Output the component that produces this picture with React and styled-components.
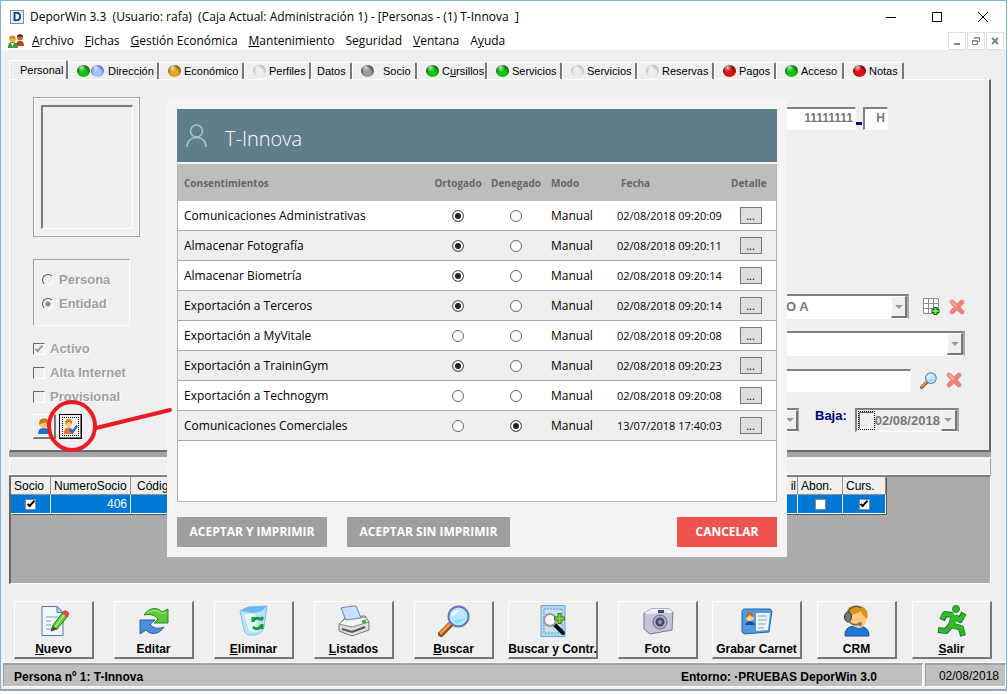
import React from "react";
import styled, { createGlobalStyle, css } from "styled-components";

const ui = '"Open Sans", "Noto Sans", sans-serif';
const classic = '"Liberation Sans", Arial, sans-serif';

const GlobalStyle = createGlobalStyle`
  *, *::before, *::after { box-sizing: border-box; }
  body { margin: 0; background: #fff; font-family: ${classic}; font-size: 12px; color: #000; }
  button, input, select { font: inherit; color: inherit; margin: 0; padding: 0; }
`;

/* ---------- window frame ---------- */

const Window = styled.div`
  position: relative;
  margin-right: 1px;
  border: 1px solid #86aedb;
  background: #efefef;
`;

const TitleBar = styled.header`
  display: flex;
  align-items: center;
  height: 31px;
  padding: 0 17px 0 9px;
  background: #fff;
  font: 12px/16px ${ui};
`;

const AppBadge = styled.span`
  width: 14px;
  height: 14px;
  margin-right: 6px;
  border: 1px solid #6d8ec4;
  background: #e8f0fb;
  color: #12306e;
  font: bold 12px/12px ${classic};
  text-align: center;
`;

const Title = styled.h1`
  flex: 1;
  margin: 0;
  font: inherit;
  white-space: pre;
`;

const WindowButtons = styled.div`
  display: flex;
  gap: 34px;
`;

const FrameButton = styled.button`
  display: flex;
  width: 12px;
  height: 12px;
  border: 0;
  background: none;
`;

const MenuBar = styled.nav`
  display: flex;
  align-items: center;
  height: 18px;
  padding: 0 2px 0 7px;
  background: #fff;
  font: 12px/16px ${ui};
`;

const MenuItems = styled.div`
  display: flex;
  flex: 1;
  gap: 11px;
  margin-left: 8px;
`;

const MenuItem = styled.button`
  border: 0;
  background: none;
  white-space: nowrap;
`;

const MdiButtons = styled.div`
  display: flex;
  gap: 1px;
`;

const MdiButton = styled.button`
  display: flex;
  align-items: center;
  justify-content: center;
  width: 18px;
  height: 18px;
  border: 1px solid #e0e0e0;
  background: #fff;
`;

/* ---------- tabs and record panel ---------- */

const Workspace = styled.main`
  padding: 10px 15px 17px 8px;
`;

const Tabs = styled.div`
  display: flex;
  align-items: flex-end;
  height: 19px;
  font-size: 11px;
`;

const Tab = styled.button`
  display: flex;
  align-items: center;
  gap: ${(p) => p.$gap || 3}px;
  width: ${(p) => p.$w}px;
  height: ${(p) => (p.$active ? 19 : 17)}px;
  padding-left: ${(p) => (p.$active ? 10 : p.$plain ? 5 : 8)}px;
  border: 0;
  border-top: 1px solid #fff;
  border-left: 1px solid #fff;
  border-right: 2px solid #777;
  border-radius: 2px 2px 0 0;
  background: #efefef;
  white-space: nowrap;
`;

const tones = {
  green: ["#10c410", "#0a4a0a"],
  blue: ["#a9c0ff", "#4a5da8"],
  amber: ["#e8a818", "#5c4208"],
  white: ["#ececec", "#aaaaaa"],
  gray: ["#9a9a9a", "#333333"],
  red: ["#e01010", "#4c0808"],
};

const Dot = styled.span`
  width: 13px;
  height: 12px;
  border-radius: 50%;
  background:
    radial-gradient(circle at 35% 20%, #ffffffbb 0, #ffffff00 35%),
    radial-gradient(circle at 50% 65%, ${(p) => tones[p.$tone][0]} 35%, ${(p) => tones[p.$tone][1]} 80%);
`;

const Dots = styled.span`
  display: flex;
  gap: 1px;
`;

const Panel = styled.section`
  display: flex;
  justify-content: space-between;
  padding: 17px 0 11px 23px;
  border: solid;
  border-width: 1px 2px 2px 1px;
  border-color: #fff #696969 #696969 #fff;
`;

const LeftColumn = styled.div`
  display: flex;
  flex-direction: column;
  width: 107px;
`;

const PhotoFrame = styled.div`
  display: flex;
  height: 140px;
  padding: 7px 6px 7px 7px;
  border: 1px solid #a0a0a0;
  box-shadow: inset 0 0 0 1px #fff;
`;

const Photo = styled.div`
  flex: 1;
  border: solid;
  border-width: 2px 1px 1px 2px;
  border-color: #7a7a7a #fff #fff #7a7a7a;
`;

const KindGroup = styled.fieldset`
  width: 97px;
  height: 67px;
  margin: 22px 0 11px;
  padding: 8px 0 0 8px;
  border: 1px solid;
  border-color: #a0a0a0 #fff #fff #a0a0a0;
`;

const DisabledLabel = styled.label`
  display: flex;
  align-items: center;
  gap: 5px;
  height: 24px;
  color: #a0a0a0;
  font: bold 13px/16px ${classic};
  text-shadow: 1px 1px 0 #fff;
  white-space: nowrap;
`;

const SunkenRadio = styled.input.attrs({ type: "radio" })`
  appearance: none;
  width: 12px;
  height: 12px;
  border: 1px solid;
  border-color: #555 #fff #fff #555;
  border-radius: 50%;
  background: radial-gradient(circle, ${(p) => (p.checked ? "#888" : "#efefef")} 2px, #efefef 3px);
`;

const tick = css`
  &:checked::after {
    content: "";
    width: 4px;
    height: 8px;
    margin-bottom: 2px;
    border: solid ${(p) => p.$ink || "#000"};
    border-width: 0 2px 2px 0;
    transform: rotate(42deg);
  }
`;

const SunkenCheck = styled.input.attrs({ type: "checkbox" })`
  appearance: none;
  display: flex;
  align-items: center;
  justify-content: center;
  width: 12px;
  height: 12px;
  border: 1px solid;
  border-color: #666 #fff #fff #666;
  ${tick}
`;

const SmallButtons = styled.div`
  display: flex;
  gap: 3px;
  margin-top: 5px;
`;

const raised = css`
  border: solid;
  border-width: 1px 2px 2px 1px;
  border-color: #fff #777 #777 #fff;
  background: #efefef;
`;

const SmallButton = styled.button`
  display: flex;
  align-items: center;
  justify-content: center;
  width: 23px;
  height: 25px;
  ${raised}
  ${(p) => p.$focused && css`
    outline: 1px solid #000;
    outline-offset: -1px;
  `}
`;

const FocusRing = styled.span`
  display: flex;
  outline: 1px dotted #000;
`;

const RightColumn = styled.div`
  display: flex;
  flex-direction: column;
  gap: 12px;
  width: 209px;
  padding-top: 10px;
`;

const FieldRow = styled.div`
  display: flex;
  align-items: ${(p) => p.$align || "center"};
  height: ${(p) => p.$h || 24}px;
`;

const IdRow = styled(FieldRow)`
  margin-bottom: 152px;
`;

const sunken = css`
  border: solid;
  border-width: 2px 1px 1px 2px;
  border-color: #808080 #fff #fff #808080;
`;

const TextField = styled.input`
  width: ${(p) => p.$w}px;
  height: 23px;
  padding: 0 2px 3px;
  ${sunken}
  background: #fff;
  color: #777;
  font: bold ${(p) => p.$size || 13}px/16px ${classic};
  text-align: right;
`;

const Dash = styled.span`
  align-self: flex-end;
  width: 6px;
  height: 3px;
  margin: 0 1px 5px 0;
  background: #000080;
`;

const Combo = styled.div`
  display: flex;
  width: ${(p) => p.$w}px;
  height: ${(p) => p.$h || 25}px;
  ${sunken}
  border-right: 2px solid #aaa;
  background: ${(p) => p.$fill || "#fff"};
`;

const ComboSelect = styled.select`
  flex: 1;
  min-width: 0;
  appearance: none;
  padding-left: 4px;
  border: 0;
  background: none;
  color: #777;
  opacity: 1;
  font: bold 13px/16px ${classic};
`;

const ComboArrow = styled.span`
  display: flex;
  flex: none;
  align-items: center;
  justify-content: center;
  width: 16px;
  ${raised}
  &::after {
    content: "";
    border: 4px solid transparent;
    border-top-color: #999;
    border-bottom: 0;
  }
`;

const IconPair = styled.div`
  display: flex;
  align-items: center;
  gap: 9px;
  margin-left: ${(p) => p.$gap}px;
`;

const IconButton = styled.button`
  display: flex;
  border: 0;
  background: none;
`;

const BajaLabel = styled.label`
  margin: 0 8px 0 16px;
  padding-bottom: 8px;
  color: #000080;
  font: bold 13px/16px ${classic};
`;

const DateText = styled.input`
  flex: 1;
  min-width: 0;
  border: 0;
  background: none;
  color: #777;
  font: bold 13px/16px ${classic};
`;

const FocusCheck = styled(SunkenCheck)`
  flex: none;
  width: 15px;
  height: 17px;
  margin: 2px 1px 0 2px;
  outline: 1px dotted #000;
`;

const Splitter = styled.div`
  height: 5px;
  background: #a3a3a3;
`;

const Caption = styled.div`
  height: 17px;
  margin-top: 1px;
  border: 1px solid #fff;
  border-right-color: #a0a0a0;
`;

/* ---------- members grid ---------- */

const GridArea = styled.div`
  height: 109px;
  padding-right: 104px;
  border: solid;
  border-width: 2px 1px 1px 2px;
  border-color: #808080 #fff #fff #696969;
  background: #ababab;
`;

const MembersTable = styled.table`
  width: 100%;
  table-layout: fixed;
  border-collapse: separate;
  border-spacing: 0;
  box-shadow: 1px 1px 0 #555;

  th, td {
    height: 18px;
    padding: 0 3px;
    overflow: hidden;
    border-right: 1px solid #909090;
    border-bottom: 1px solid #909090;
    background: #efefef;
    font: 12px/16px ${classic};
    text-align: left;
    white-space: nowrap;
  }
  td {
    height: 19px;
    border-color: #fff;
    background: #0078d7;
    color: #fff;
  }
`;

const WideHead = styled.th`
  && { padding: 0 1px 0 6px; }
  span { float: right; }
`;

const NumberCell = styled.td`
  && { text-align: right; }
`;

const GridCheck = styled.input.attrs({ type: "checkbox" })`
  appearance: none;
  display: flex;
  align-items: center;
  justify-content: center;
  width: 11px;
  height: 11px;
  margin: 0 auto;
  border: 1px solid #888;
  background: #fff;
  ${tick}
`;

/* ---------- bottom toolbar and status ---------- */

const Toolbar = styled.div`
  display: flex;
  gap: 13px;
  height: 58px;
  padding: 0 14px 0 13px;
`;

const ToolGroup = styled.div`
  display: flex;
  gap: ${(p) => p.$gap}px;
  &:not(:first-child) { margin-left: auto; }
`;

const ToolButton = styled.button`
  display: flex;
  flex-direction: column;
  align-items: center;
  justify-content: space-between;
  width: ${(p) => (p.$wide ? 90 : 80)}px;
  padding: 3px 0 1px;
  ${raised}
  font: bold 12px/14px ${classic};
  white-space: nowrap;
`;

const StatusBar = styled.footer`
  display: flex;
  gap: 2px;
  height: 28px;
  margin-top: 3px;
  padding: 0 0 2px 2px;
  border-top: 1px solid #fff;
  border-bottom: 1px solid #999;
`;

const StatusCell = styled.div`
  display: flex;
  align-items: center;
  justify-content: space-between;
  flex: ${(p) => (p.$grow ? 1 : "0 0 79px")};
  padding: ${(p) => (p.$grow ? "3px 45px 0 10px" : "0 6px 0 13px")};
  border: solid;
  border-width: 2px 1px 1px 1px;
  border-color: #a0a0a0 #fff #fff #a0a0a0;
  background: #bfbfbf;
  font-weight: ${(p) => (p.$grow ? "bold" : "normal")};
`;

/* ---------- consent dialog ---------- */

const Dialog = styled.section`
  position: absolute;
  top: 98px;
  left: 166px;
  width: 620px;
  padding: 10px;
  background: #f4f4f4;
  font: 12px/16px ${ui};
`;

const DialogHeader = styled.header`
  display: flex;
  align-items: center;
  gap: 18px;
  height: 53px;
  margin-bottom: 2px;
  padding-left: 9px;
  background: #607d8b;
  color: #fff;
`;

const DialogTitle = styled.h2`
  margin: 6px 0 0;
  font: 300 20px/28px ${ui};
`;

const TableBox = styled.div`
  min-height: 338px;
  border: 1px solid #b4b4b4;
  border-top: 0;
  background: #fff;
`;

const ConsentTable = styled.table`
  width: 100%;
  table-layout: fixed;
  border-collapse: separate;
  border-spacing: 0;

  th {
    height: 37px;
    padding: 0 0 0 6px;
    background: #bdbdbd;
    color: #666;
    font: bold 10px/16px ${ui};
    text-align: left;
  }
  td {
    height: 30px;
    padding: 0 0 0 6px;
    border-bottom: 1px solid #a8a8a8;
    white-space: nowrap;
  }
  tbody tr:nth-child(even) { background: #eee; }
  th.center, td.center { padding: 0; text-align: center; }
  th.date { padding-left: 10px; }
  td.date { font-size: 11px; }
`;

const ConsentRadio = styled.input.attrs({ type: "radio" })`
  appearance: none;
  display: block;
  width: 12px;
  height: 12px;
  margin: 0 auto;
  border: 1px solid #666;
  border-radius: 50%;
  background: #fff;
  box-shadow: inset 0 0 0 2px #fff;
  &:checked { background: #222; }
`;

const DetailButton = styled.button`
  display: block;
  width: 22px;
  height: 17px;
  margin: 0 auto;
  border: 1px solid #777;
  background: #ddd;
  font: 11px/14px ${ui};
`;

const DialogActions = styled.div`
  display: flex;
  gap: 20px;
  margin-top: 15px;
`;

const ActionButton = styled.button`
  height: 30px;
  width: ${(p) => p.$w}px;
  border: 0;
  background: ${(p) => (p.$danger ? "#ef5350" : "#9e9e9e")};
  color: #fff;
  font: bold 12px/16px ${ui};
  ${(p) => p.$danger && "margin-left: auto;"}
`;

const Callout = styled.svg`
  position: absolute;
  top: 397px;
  left: 44px;
  pointer-events: none;
`;

/* ---------- drawings ---------- */

const Person = () => (
  <svg width="16" height="16" viewBox="0 0 16 16">
    <path d="M2 16c0-4 2-6 6-6s6 2 6 6z" fill="#1f6fd0" />
    <circle cx="8" cy="6" r="4.4" fill="#ffc777" />
    <path d="M3.400 7C2.500 2 5 .6 8 .6s5.500 1.600 4.600 6.400C11 6.500 10 5 9.500 4 8 5.500 5 5 3.400 7z" fill="#c87818" />
  </svg>
);

const PersonCheck = () => (
  <svg width="15" height="17" viewBox="0 0 16 18">
    <path d="M1 17c0-4 1-7 5-7s5 3 5 7z" fill="#e8752a" />
    <circle cx="6" cy="6" r="3.500" fill="#ffcf7a" />
    <path d="M2.500 7C1.500 3 3.500 1 6 1s4.500 2 3.500 5C8 6 7 4 7 4S4 5 2.500 7z" fill="#c98512" />
    <path d="M7 12l3 3 5-7" fill="none" stroke="#2767c8" strokeWidth="2.500" />
  </svg>
);

const People = () => (
  <svg width="16" height="16" viewBox="0 0 16 16">
    <path d="M8 13c0-4 1-5 4-5s4 2 4 5z" fill="#b8431c" />
    <circle cx="12" cy="4.500" r="3" fill="#c46a30" />
    <path d="M9 4c0-3 5-4 6 0-2-1-4-1-6 0z" fill="#3c1d0c" />
    <path d="M0 15c0-4 1-6 4.500-6S10 11 10 15z" fill="#3c9a3a" />
    <circle cx="4.500" cy="6" r="3.300" fill="#f2b23e" />
    <path d="M1 6c0-4 6-5 7 0-2-1-5-1-7 0z" fill="#d88f14" />
    <path d="M3 10l1.500 4L6 10z" fill="#fff" />
  </svg>
);

const Cross = () => (
  <svg width="16" height="16" viewBox="0 0 16 16">
    <path d="M3 3l10 10M13 3L3 13" stroke="#ec8279" strokeWidth="4.600" strokeLinecap="round" />
    <path d="M3 3l4 4" stroke="#f5b0a8" strokeWidth="2" strokeLinecap="round" />
  </svg>
);

const SheetAdd = () => (
  <svg width="17" height="17" viewBox="0 0 17 17">
    <path d="M.5.5h15v15H.5zM5.500.5v15M10.500.5v15M.5 5.500h15M.5 10.500h15" fill="#fff" stroke="#888e98" />
    <path d="M12.500 9v8M8.500 13h8" stroke="#0b6b10" strokeWidth="4" />
    <path d="M12.500 10v6M9.500 13h6" stroke="#6ff05a" strokeWidth="2" />
  </svg>
);

const Magnifier = ({ size = 32 }) => (
  <svg width={size} height={size} viewBox="0 0 32 32">
    <path d="M3 29L13 19" stroke="#8b4a24" strokeWidth="6" strokeLinecap="round" />
    <path d="M3 28L12 19" stroke="#f29a3d" strokeWidth="3" strokeLinecap="round" />
    <circle cx="20.500" cy="11.500" r="10" fill="#b9e8ff" stroke="#6676bd" strokeWidth="2" />
    <path d="M13 11c1-5 5-7 10-6-4 1-4 5-10 6z" fill="#f2fcff" />
    <path d="M15 16c4 4 10 2 12-3-4 2-8 0-12 3z" fill="#8fdcf8" />
  </svg>
);

const toolIcons = {
  nuevo: (
    <svg width="32" height="32" viewBox="0 0 32 32">
      <path d="M4 1.500h15l6 6v23H4z" fill="#f1f6ff" stroke="#4f76bb" />
      <path d="M19 1.500v6h6z" fill="#bcd3f6" stroke="#4f76bb" />
      <path d="M8 12h12M8 16h5M8 20h5M8 24h12" stroke="#b8c6dc" strokeWidth="2" />
      <path d="M13 26l2-6L25 7l5 4-11 13z" fill="#5bcc38" stroke="#26801c" />
      <path d="M17 22L27 9" stroke="#a8f084" strokeWidth="1.500" />
      <path d="M25 7c1-3 7-1 6 3l-2 2-5-4z" fill="#e44836" />
      <path d="M13 26l2-5 4 3z" fill="#654423" />
    </svg>
  ),
  editar: (
    <svg width="34" height="32" viewBox="0 0 34 32">
      <path d="M7 10C12 2 21 2 25 7l6-3v14H17l4-4c-4-5-9-5-14-4z" fill="#5dc83a" stroke="#2c8827" />
      <path d="M27 22c-5 8-14 8-18 3l-6 4V15h15l-5 4c3 5 9 5 14 3z" fill="#4c8edb" stroke="#205fae" />
      <path d="M10 8c5-4 11-3 15 1l4-2" fill="none" stroke="#b0ee91" />
    </svg>
  ),
  eliminar: (
    <svg width="32" height="32" viewBox="0 0 32 32">
      <path d="M2 6l8-4 19-1-3 21c-1 6-8 9-14 8-4 0-5-2-6-5z" fill="#b7e2fb" stroke="#8cbde0" />
      <path d="M2 6l8-4 19-1-5 5-8 2z" fill="#6db7ec" />
      <path d="M6 9l5 17 9 1-3-18z" fill="#e5f7ff" />
      <path d="M15 17c1-4 5-5 8-2M15 17v-5M23 15l2-3M23 20c-1 4-5 5-8 2M24 19v5" fill="none" stroke="#149b35" strokeWidth="3" />
    </svg>
  ),
  listados: (
    <svg width="32" height="32" viewBox="0 0 32 32">
      <path d="M1 19l7-7 19-1 4 6v8l-17 6-13-5z" fill="#ddd" stroke="#777" />
      <path d="M1 19l13 3 17-5-4-5-19 1z" fill="#f6f6f6" stroke="#888" />
      <path d="M8 15L3 3c5-1 10-2 15-2l5 12z" fill="#cae1fb" stroke="#6584b7" />
      <path d="M4 24l10 3 13-5" fill="none" stroke="#555" strokeWidth="2" />
      <path d="M24 17l4-1" stroke="#42b82d" strokeWidth="3" />
    </svg>
  ),
  buscar: <Magnifier />,
  contr: (
    <svg width="32" height="32" viewBox="0 0 32 32">
      <path d="M4 .5h24v31H4z" fill="#b3d8f3" stroke="#67a5d5" />
      <path d="M7 4h18v24H7z" fill="#c4e1f6" stroke="#6a95bd" strokeDasharray="2 1" />
      <path d="M17 19l9 9" stroke="#111" strokeWidth="4" strokeLinecap="round" />
      <circle cx="13" cy="15" r="6" fill="#f4f4f4" stroke="#999" strokeWidth="2" />
      <path d="M22.500 8v11M17 13.500h11" stroke="#397c16" strokeWidth="4" />
      <path d="M22.500 9v9M18 13.500h9" stroke="#82d52d" strokeWidth="2" />
    </svg>
  ),
  foto: (
    <svg width="32" height="32" viewBox="0 0 32 32">
      <path d="M2 8l7-4h19l3 3-1 18-22 4-6-5z" fill="#c4c5d8" stroke="#777891" />
      <path d="M2 8l6 1 23-2-3-3H9z" fill="#efeff8" />
      <path d="M16 5h6v3h-6z" fill="#454864" />
      <path d="M25 7h4" stroke="#fff" strokeWidth="2" />
      <circle cx="18" cy="17" r="7" fill="#aeb0c4" stroke="#6a6c87" />
      <circle cx="18" cy="17" r="4.500" fill="#46496a" />
      <circle cx="18" cy="17" r="2" fill="#8f9ad0" />
    </svg>
  ),
  carnet: (
    <svg width="32" height="32" viewBox="0 0 32 32">
      <path d="M1 7c0-2 1-3 3-3h25l2 2-3 21-25 2-2-2z" fill="#4f9ae0" stroke="#2565ac" />
      <path d="M15 8h14l-2 17-12 1z" fill="#edf5fc" />
      <path d="M17 11h9M17 15h9M17 19h8M17 23h6" stroke="#879db0" />
      <path d="M4 20c1-5 9-5 10 0z" fill="#164e91" />
      <circle cx="9" cy="12" r="4" fill="#ffd28a" />
      <path d="M5 13c-1-7 8-7 8-1-3 0-4-2-4-2z" fill="#b87317" />
    </svg>
  ),
  crm: (
    <svg width="32" height="32" viewBox="0 0 32 32">
      <path d="M4 31c0-8 4-10 12-10s12 3 12 10z" fill="#1c78d2" stroke="#104e9c" />
      <path d="M7 9C8 2 12 1 17 1c7 0 10 5 9 12-1 6-4 10-8 10-5 0-11-5-11-14z" fill="#ffc978" />
      <path d="M6 12C4 3 10 0 17 1c8 0 11 6 9 13-3-2-5-5-6-8-4 3-9 3-14 6z" fill="#d69420" />
      <path d="M7 9c1-8 9-9 13-6" fill="none" stroke="#555" strokeWidth="1.500" />
      <ellipse cx="7" cy="12" rx="3.500" ry="5" fill="#777" stroke="#333" />
      <path d="M8 16c2 4 6 4 10 3" fill="none" stroke="#666" strokeWidth="1.500" />
      <circle cx="19" cy="19" r="2" fill="#777" />
    </svg>
  ),
  salir: (
    <svg width="32" height="32" viewBox="0 0 32 32">
      <g stroke="#168023" strokeWidth="6" strokeLinejoin="round" fill="none">
        <path d="M18 11l-3 9 10 3 2 8M15 20l-5 6-8-1M17 10L9 9l-3 6M19 12l5 3 4-7" />
      </g>
      <g stroke="#35b82d" strokeWidth="4" strokeLinejoin="round" fill="none">
        <path d="M18 11l-3 9 10 3 2 7M15 20l-5 6-7-1M17 10L9 9l-3 5M19 12l5 3 4-6" />
      </g>
      <path d="M16 8l6 4-4 10-5-2z" fill="#35b82d" />
      <circle cx="20" cy="4" r="3.500" fill="#35b82d" stroke="#168023" />
    </svg>
  ),
};

/* ---------- data ---------- */

const menu = ["_Archivo", "_Fichas", "_Gestión Económica", "_Mantenimiento", "Se_guridad", "_Ventana", "A_yuda"];

const tabs = [
  { label: "Personal", w: 59, active: true },
  { label: "Dirección", w: 91, dots: ["green", "blue"], gap: 4 },
  { label: "Económico", w: 85, dots: ["amber"] },
  { label: "Perfiles", w: 67, dots: ["white"] },
  { label: "Datos", w: 41 },
  { label: "Socio", w: 65, dots: ["gray"], gap: 9 },
  { label: "C_ursillos", w: 70, dots: ["green"] },
  { label: "Servicios", w: 75, dots: ["green"] },
  { label: "Servicios", w: 75, dots: ["white"] },
  { label: "Reservas", w: 77, dots: ["white"] },
  { label: "Pagos", w: 62, dots: ["red"] },
  { label: "Acceso", w: 68, dots: ["green"] },
  { label: "Notas", w: 60, dots: ["red"] },
];

const consents = [
  ["Comunicaciones Administrativas", "yes", "02/08/2018 09:20:09"],
  ["Almacenar Fotografía", "yes", "02/08/2018 09:20:11"],
  ["Almacenar Biometría", "yes", "02/08/2018 09:20:14"],
  ["Exportación a Terceros", "yes", "02/08/2018 09:20:14"],
  ["Exportación a MyVitale", "", "02/08/2018 09:20:08"],
  ["Exportación a TraininGym", "yes", "02/08/2018 09:20:23"],
  ["Exportación a Technogym", "", "02/08/2018 09:20:08"],
  ["Comunicaciones Comerciales", "no", "13/07/2018 17:40:03"],
];

const tools = [
  { gap: 20, items: [["nuevo", "_Nuevo"], ["editar", "Editar"], ["eliminar", "_Eliminar"], ["listados", "_Listados"], ["buscar", "_Buscar"]] },
  { gap: 20, items: [["contr", "Buscar y Contr.", true], ["foto", "Foto"]] },
  { gap: 15, items: [["carnet", "Grabar Carnet", true], ["crm", "CRM"], ["salir", "_Salir"]] },
];

/* An underscore marks the access key: the letter after it is underlined. */
function KeyText({ text }) {
  const at = text.indexOf("_");
  if (at < 0) return <span>{text}</span>;
  return (
    <span>
      {text.slice(0, at)}
      <u>{text[at + 1]}</u>
      {text.slice(at + 2)}
    </span>
  );
}

export default function App() {
  return (
    <>
      <GlobalStyle />
      <Window>
        <TitleBar>
          <AppBadge>D</AppBadge>
          <Title>{"DeporWin 3.3  (Usuario: rafa)  (Caja Actual: Administración 1) - [Personas - (1) T-Innova  ]"}</Title>
          <WindowButtons>
            <FrameButton aria-label="Minimizar">
              <svg width="12" height="12"><path d="M1 6.500h10" stroke="#000" /></svg>
            </FrameButton>
            <FrameButton aria-label="Maximizar">
              <svg width="12" height="12"><path d="M1.500 1.500h9v9h-9z" fill="none" stroke="#000" /></svg>
            </FrameButton>
            <FrameButton aria-label="Cerrar">
              <svg width="12" height="12"><path d="M1 1l10 10M11 1L1 11" stroke="#000" /></svg>
            </FrameButton>
          </WindowButtons>
        </TitleBar>
        <MenuBar>
          <People />
          <MenuItems>
            {menu.map((m) => <MenuItem key={m}><KeyText text={m} /></MenuItem>)}
          </MenuItems>
          <MdiButtons>
            <MdiButton aria-label="Minimizar ficha">
              <svg width="10" height="10"><path d="M2 8h6" stroke="#7b8591" strokeWidth="2" /></svg>
            </MdiButton>
            <MdiButton aria-label="Restaurar ficha">
              <svg width="10" height="10"><path d="M3.500 3V1.500h5v4H7M1.500 4.500h5v4h-5zM1 5h6M3 2h6" fill="none" stroke="#7b8591" /></svg>
            </MdiButton>
            <MdiButton aria-label="Cerrar ficha">
              <svg width="10" height="10"><path d="M2 2l6 6M8 2L2 8" stroke="#7b8591" strokeWidth="2" /></svg>
            </MdiButton>
          </MdiButtons>
        </MenuBar>

        <Workspace>
          <Tabs role="tablist">
            {tabs.map((t, i) => (
              <Tab key={i} role="tab" aria-selected={!!t.active} $w={t.w} $gap={t.gap} $active={t.active} $plain={!t.dots}>
                {t.dots && <Dots>{t.dots.map((d) => <Dot key={d} $tone={d} />)}</Dots>}
                <KeyText text={t.label} />
              </Tab>
            ))}
          </Tabs>

          <Panel>
            <LeftColumn>
              <PhotoFrame><Photo /></PhotoFrame>
              <KindGroup>
                <DisabledLabel><SunkenRadio name="kind" disabled checked={false} readOnly />Persona</DisabledLabel>
                <DisabledLabel><SunkenRadio name="kind" disabled checked readOnly />Entidad</DisabledLabel>
              </KindGroup>
              <DisabledLabel><SunkenCheck disabled defaultChecked $ink="#999" />Activo</DisabledLabel>
              <DisabledLabel><SunkenCheck disabled />Alta Internet</DisabledLabel>
              <DisabledLabel><SunkenCheck disabled />Provisional</DisabledLabel>
              <SmallButtons>
                <SmallButton aria-label="Persona"><Person /></SmallButton>
                <SmallButton aria-label="Consentimientos" $focused><FocusRing><PersonCheck /></FocusRing></SmallButton>
              </SmallButtons>
            </LeftColumn>

            <RightColumn>
              <IdRow $h={23}>
                <TextField $w={76} $size={12} aria-label="Documento" defaultValue="11111111" disabled />
                <Dash />
                <TextField $w={25} $size={12} aria-label="Letra" defaultValue="H" disabled />
              </IdRow>
              <FieldRow $h={25}>
                <Combo $w={129}>
                  <ComboSelect aria-label="Grupo" disabled><option>O A</option></ComboSelect>
                  <ComboArrow />
                </Combo>
                <IconPair $gap={14}>
                  <IconButton aria-label="Añadir"><SheetAdd /></IconButton>
                  <IconButton aria-label="Quitar"><Cross /></IconButton>
                </IconPair>
              </FieldRow>
              <FieldRow $h={25}>
                <Combo $w={185}>
                  <ComboSelect aria-label="Tarifa" disabled />
                  <ComboArrow />
                </Combo>
              </FieldRow>
              <FieldRow>
                <TextField $w={131} aria-label="Titular" disabled />
                <IconPair $gap={9}>
                  <IconButton aria-label="Buscar titular"><Magnifier size={17} /></IconButton>
                  <IconButton aria-label="Quitar titular"><Cross /></IconButton>
                </IconPair>
              </FieldRow>
              <FieldRow $h={28} $align="flex-end">
                <Combo $w={19} $h={24} $fill="#efefef"><ComboArrow /></Combo>
                <BajaLabel htmlFor="baja">Baja:</BajaLabel>
                <Combo $w={104} $h={24} $fill="#efefef">
                  <FocusCheck disabled aria-label="Con baja" />
                  <DateText id="baja" defaultValue="02/08/2018" disabled />
                  <ComboArrow />
                </Combo>
              </FieldRow>
            </RightColumn>
          </Panel>
          <Splitter />
          <Caption />

          <GridArea>
            <MembersTable>
              <colgroup>
                <col width="40" /><col width="80" /><col /><col width="45" /><col width="43" />
              </colgroup>
              <thead>
                <tr><th>Socio</th><th>NumeroSocio</th><WideHead>Código<span>il</span></WideHead><th>Abon.</th><th>Curs.</th></tr>
              </thead>
              <tbody>
                <tr>
                  <td><GridCheck defaultChecked aria-label="Socio" /></td>
                  <NumberCell>406</NumberCell>
                  <td />
                  <td><GridCheck aria-label="Abonado" /></td>
                  <td><GridCheck defaultChecked aria-label="Cursillos" /></td>
                </tr>
              </tbody>
            </MembersTable>
          </GridArea>
        </Workspace>

        <Toolbar>
          {tools.map((g, i) => (
            <ToolGroup key={i} $gap={g.gap}>
              {g.items.map(([icon, label, wide]) => (
                <ToolButton key={icon} $wide={wide}>{toolIcons[icon]}<KeyText text={label} /></ToolButton>
              ))}
            </ToolGroup>
          ))}
        </Toolbar>

        <StatusBar>
          <StatusCell $grow><span>Persona nº 1: T-Innova</span><span>Entorno: ·PRUEBAS DeporWin 3.0</span></StatusCell>
          <StatusCell>02/08/2018</StatusCell>
        </StatusBar>

        <Dialog role="dialog" aria-label="Consentimientos">
          <DialogHeader>
            <svg width="21" height="24" viewBox="0 0 21 24" fill="none" stroke="#a9c4cf" strokeWidth="1.500">
              <circle cx="10.500" cy="7" r="6" />
              <path d="M1 23c0-6 4-9.500 9.500-9.500S20 17 20 23" />
            </svg>
            <DialogTitle>T-Innova</DialogTitle>
          </DialogHeader>
          <TableBox>
            <ConsentTable>
              <colgroup>
                <col /><col width="58" /><col width="58" /><col width="66" /><col width="114" /><col width="51" />
              </colgroup>
              <thead>
                <tr>
                  <th>Consentimientos</th><th className="center">Ortogado</th><th className="center">Denegado</th>
                  <th>Modo</th><th className="date">Fecha</th><th>Detalle</th>
                </tr>
              </thead>
              <tbody>
                {consents.map(([name, answer, date]) => (
                  <tr key={name}>
                    <td>{name}</td>
                    <td className="center"><ConsentRadio name={name} aria-label={`${name}: otorgado`} defaultChecked={answer === "yes"} /></td>
                    <td className="center"><ConsentRadio name={name} aria-label={`${name}: denegado`} defaultChecked={answer === "no"} /></td>
                    <td>Manual</td>
                    <td className="date">{date}</td>
                    <td className="center"><DetailButton aria-label={`Detalle de ${name}`}>...</DetailButton></td>
                  </tr>
                ))}
              </tbody>
            </ConsentTable>
          </TableBox>
          <DialogActions>
            <ActionButton $w={150}>ACEPTAR Y IMPRIMIR</ActionButton>
            <ActionButton $w={163}>ACEPTAR SIN IMPRIMIR</ActionButton>
            <ActionButton $w={100} $danger>CANCELAR</ActionButton>
          </DialogActions>
        </Dialog>

        <Callout width="130" height="56" viewBox="0 0 130 56" fill="none" stroke="#e81c24" strokeWidth="4">
          <ellipse cx="27" cy="28" rx="23" ry="24" />
          <path d="M51 30l74-18" strokeLinecap="round" />
        </Callout>
      </Window>
    </>
  );
}
